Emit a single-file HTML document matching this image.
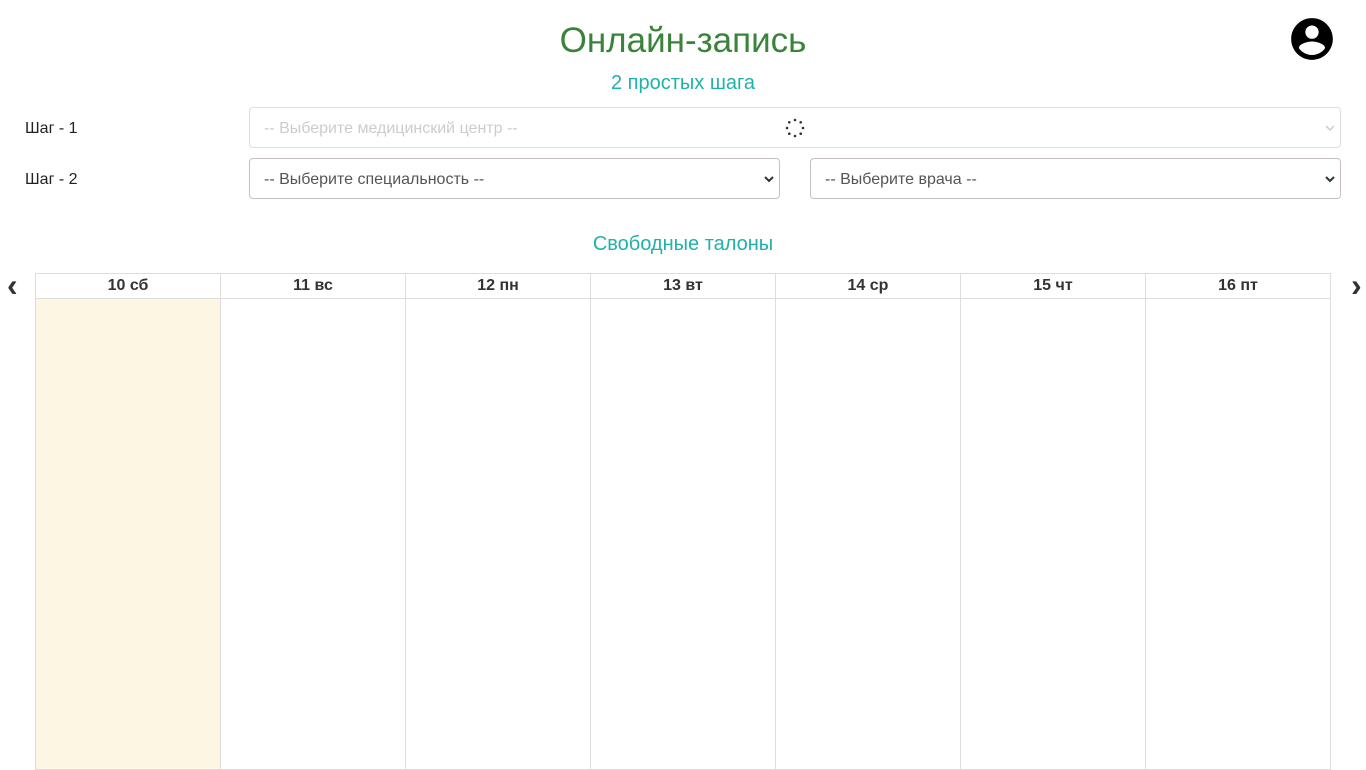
<!DOCTYPE html>
<html><head><meta charset="utf-8"><style>
body{margin:0;width:1366px;height:768px;overflow:hidden;background:#fff;font-family:"Liberation Sans",sans-serif;position:relative}
.a{position:absolute}
h1{position:absolute;left:0;width:1366px;top:21px;margin:0;text-align:center;font-weight:normal;font-size:35px;color:#3a833a}
.sub{left:0;width:1366px;top:72px;text-align:center;font-size:20px;color:#20b2aa}
.lbl{font-size:16px;color:#222;left:25px}
.sel{border:1px solid #c8bfc4;border-radius:4px;height:41px;box-sizing:border-box;font-size:16px;color:#555;padding:12px 14px 0;}
.sel svg{position:absolute;right:4px;top:16px}
table{position:absolute;left:35px;top:273px;border-collapse:collapse;width:1296px}
td,th{border:1px solid #ddd;width:185px;font-size:16px;color:#333;padding:0}
th{height:24px;font-weight:bold}
td{height:470px}
</style></head><body>
<h1>Онлайн-запись</h1>
<div class="a sub">2 простых шага</div>
<svg class="a" style="left:1287px;top:14px" width="50" height="50" viewBox="0 0 24 24"><path d="M12 2C6.48 2 2 6.48 2 12s4.48 10 10 10 10-4.48 10-10S17.52 2 12 2zm0 3.5a3.2 3.2 0 110 6.4 3.2 3.2 0 010-6.4zm0 14.2c-2.6 0-4.9-1.3-6.3-3.3.03-2.1 4.2-3.2 6.3-3.2s6.27 1.1 6.3 3.2c-1.4 2-3.7 3.3-6.3 3.3z"/></svg>
<div class="a lbl" style="top:120px">Шаг - 1</div>
<div class="a lbl" style="top:171px">Шаг - 2</div>
<div class="a sel" style="left:249px;top:107px;width:1092px;color:#ccc;border-color:#ddd">-- Выберите медицинский центр --<svg width="12" height="8"><path d="M2 2l4 4 4-4" stroke="#ccc" fill="none" stroke-width="1.5"/></svg></div>
<svg class="a" style="left:785px;top:118px" width="20" height="20"><g fill="#333"><circle cx="10" cy="2" r="1.3"/><circle cx="15.7" cy="4.3" r="1.3"/><circle cx="18" cy="10" r="1.3"/><circle cx="15.7" cy="15.7" r="1.3"/><circle cx="10" cy="18" r="1.3"/><circle cx="4.3" cy="15.7" r="1.3"/><circle cx="2" cy="10" r="1.3"/><circle cx="4.3" cy="4.3" r="1.3"/></g></svg>
<div class="a sel" style="left:249px;top:158px;width:531px">-- Выберите специальность --<svg width="12" height="8"><path d="M2 2l4 4 4-4" stroke="#333" fill="none" stroke-width="2"/></svg></div>
<div class="a sel" style="left:810px;top:158px;width:531px">-- Выберите врача --<svg width="12" height="8"><path d="M2 2l4 4 4-4" stroke="#333" fill="none" stroke-width="2"/></svg></div>
<div class="a" style="left:0;width:1366px;top:233px;text-align:center;font-size:20px;color:#20b2aa">Свободные талоны</div>
<div class="a" style="left:7px;top:267px;font-size:32px;font-weight:bold;color:#333">‹</div>
<div class="a" style="left:1351px;top:267px;font-size:32px;font-weight:bold;color:#333">›</div>
<table><tr><th style="height:23px">10 сб</th><th>11 вс</th><th>12 пн</th><th>13 вт</th><th>14 ср</th><th>15 чт</th><th>16 пт</th></tr>
<tr><td style="background:#fdf6e3"></td><td></td><td></td><td></td><td></td><td></td><td></td></tr></table>
</body></html>
